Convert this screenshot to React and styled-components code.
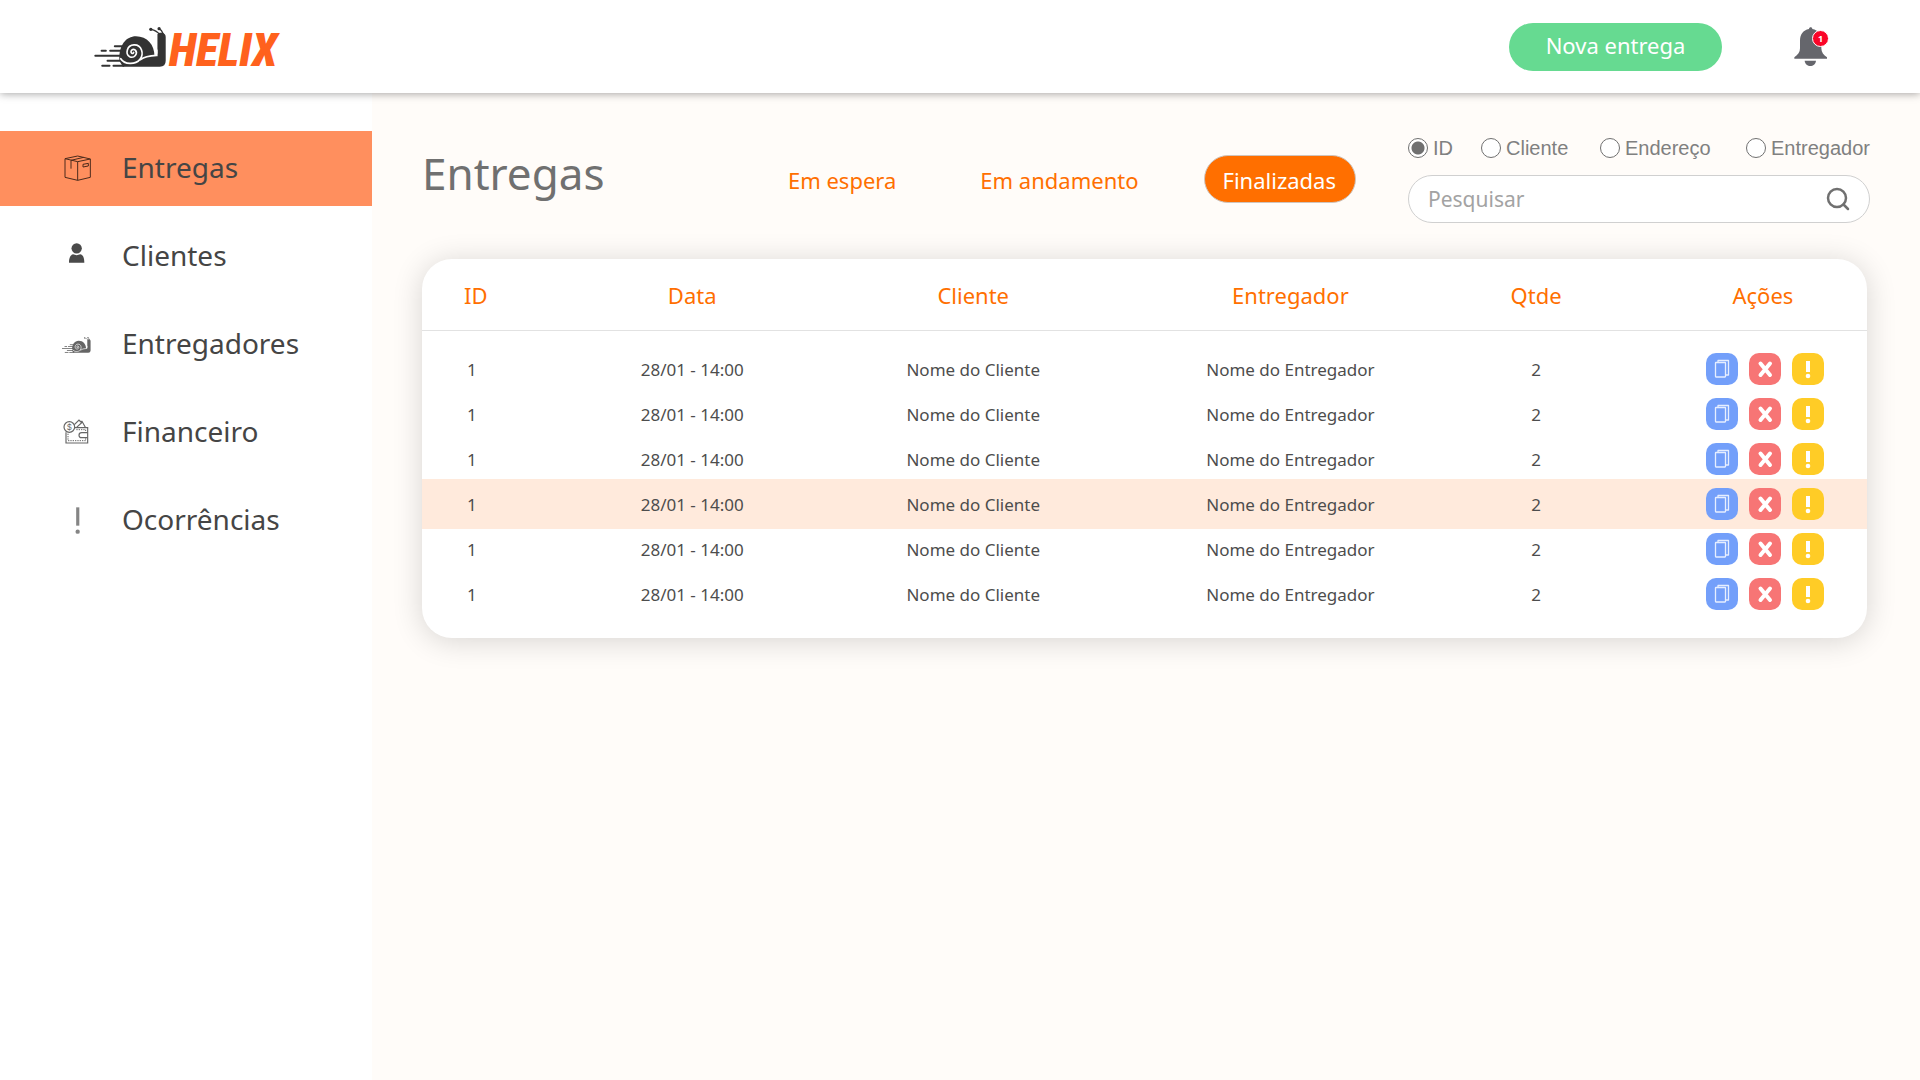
import React, { useState } from "react";
import styled, { createGlobalStyle } from "styled-components";

const ui = `"Noto Sans", "Open Sans", sans-serif`;
const orange = "#ff6f00";

const GlobalStyle = createGlobalStyle`
  *, *::before, *::after { box-sizing: border-box; }
  body { margin: 0; background: #fffcf9; font-family: ${ui}; color: #454545; }
  button, input { font-family: inherit; }
  button { border: 0; cursor: pointer; }
`;

const Page = styled.div`
  min-height: 100vh;
  display: flex;
  flex-direction: column;
`;

const TopBar = styled.header`
  position: relative;
  z-index: 1;
  height: 93px;
  padding: 0 91px 0 94px;
  display: flex;
  align-items: center;
  background: #fff;
  box-shadow: 0 1px 8px rgba(0, 0, 0, 0.35);
`;

const Logo = styled.a`
  margin-right: auto;
  display: flex;
  align-items: flex-end;
  gap: 2px;
  color: #ff611d;
  text-decoration: none;
`;

const LogoName = styled.span`
  font-family: "Roboto Condensed", "Open Sans Condensed", "Noto Sans Condensed", "Roboto", sans-serif;
  font-size: 46px;
  line-height: 34px;
  font-weight: 900;
  font-style: italic;
`;

const NewButton = styled.button`
  height: 48px;
  width: 213px;
  padding: 0 0 4px;
  margin-right: 72px;
  border-radius: 24px;
  background: #66da91;
  color: #fff;
  font-size: 22px;
`;

const BellButton = styled.button`
  position: relative;
  padding: 0;
  width: 35px;
  height: 40px;
  background: none;
`;

const Badge = styled.span`
  position: absolute;
  top: 3px;
  right: 0;
  width: 17px;
  height: 17px;
  border: 1px solid #fff;
  border-radius: 50%;
  background: #fa0528;
  color: #fff;
  font-size: 9px;
  line-height: 15px;
  font-weight: 700;
`;

const Body = styled.div`
  flex: 1;
  display: flex;
`;

const Sidebar = styled.nav`
  flex: 0 0 372px;
  padding-top: 38px;
  display: flex;
  flex-direction: column;
  gap: 13px;
  background: #fff;
`;

const NavItem = styled.a`
  height: 75px;
  padding-left: 61px;
  display: flex;
  align-items: center;
  gap: 30px;
  background: ${(p) => (p.$active ? "#ff8f5e" : "transparent")};
  color: #454545;
  font-size: 28px;
  text-decoration: none;

  svg { flex: none; }
  span { padding-bottom: 4px; }
`;

const Main = styled.main`
  flex: 1;
  min-width: 0;
  padding: 45px 50px;
`;

const Toolbar = styled.div`
  display: flex;
  align-items: flex-start;
`;

const Title = styled.h1`
  flex: 1;
  margin: 0;
  color: #707070;
  font-size: 44px;
  line-height: 70px;
  font-weight: 400;
`;

const Tabs = styled.div`
  display: flex;
  gap: 45px;
  margin: 17px 52px 0 0;
`;

const Tab = styled.button`
  height: 48px;
  padding: 2px 19px 0 18px;
  border: 1px solid ${(p) => (p.$active ? "#cfc4bd" : "transparent")};
  border-radius: 24px;
  background: ${(p) => (p.$active ? orange : "transparent")};
  color: ${(p) => (p.$active ? "#fff" : orange)};
  font-size: 22px;
  white-space: nowrap;
`;

const SearchForm = styled.form`
  width: 462px;
`;

const Filters = styled.div`
  display: grid;
  grid-template-columns: 73px 119px 146px 1fr;
`;

const Filter = styled.label`
  display: flex;
  align-items: center;
  gap: 5px;
  color: #808080;
  font-family: "Liberation Sans", Arial, sans-serif;
  font-size: 20px;
  line-height: 20px;

  input {
    appearance: none;
    flex: none;
    width: 20px;
    height: 20px;
    margin: 0;
    border: 1px solid #707070;
    border-radius: 50%;
    background: #fff;
  }
  input:checked {
    border-color: #707070;
    background: radial-gradient(circle, #707070 0 6px, #fff 7px);
  }
`;

const SearchBox = styled.div`
  height: 48px;
  margin-top: 17px;
  padding: 0 19px;
  display: flex;
  align-items: center;
  border: 1px solid #d0d0d0;
  border-radius: 24px;
  background: #fff;

  input {
    flex: 1;
    min-width: 0;
    padding: 0;
    border: 0;
    outline: 0;
    background: none;
    color: #707070;
    font-size: 21px;
  }
  input::placeholder { color: #a3a3a3; opacity: 1; }
  button { display: flex; padding: 0; background: none; }
`;

const Card = styled.section`
  margin: 36px 3px 0 0;
  padding-bottom: 21px;
  border-radius: 30px;
  background: #fff;
  box-shadow: 0 3px 30px rgba(0, 0, 0, 0.16);
`;

const Table = styled.table`
  width: 100%;
  table-layout: fixed;
  border-spacing: 0;

  tbody::before {
    content: "";
    display: block;
    height: 16px;
  }
`;

const Head = styled.th`
  height: 72px;
  padding: 0 0 0 ${(p) => (p.$first ? "42px" : "0")};
  border-bottom: 1px solid #e2e2e2;
  color: ${orange};
  font-size: 22px;
  font-weight: 400;
  text-align: ${(p) => (p.$first ? "left" : "center")};
`;

const Cell = styled.td`
  height: 45px;
  padding: 0 0 0 ${(p) => (p.$first ? "45px" : "0")};
  color: #4d4d4d;
  font-size: 17px;
  line-height: 20px;
  text-align: ${(p) => (p.$first ? "left" : "center")};
`;

const Row = styled.tr`
  ${Cell} {
    background: ${(p) => (p.$highlight ? "#ffeadc" : "none")};
    box-shadow: ${(p) => (p.$highlight ? "0 -3px #ffeadc, 0 2px #ffeadc" : "none")};
  }
`;

const Actions = styled.div`
  display: flex;
  justify-content: center;
  gap: 11px;
  padding: 0 0 1px 4px;
`;

const Action = styled.button`
  width: 32px;
  height: 32px;
  padding: 0;
  display: grid;
  place-items: center;
  border-radius: 10px;
  background: ${(p) => p.$color};
`;

const Snail = ({ width, height, color = "#333", opacity = 1 }) => (
  <svg width={width} height={height} viewBox="42 50 219 121" opacity={opacity} aria-hidden="true">
    <g fill={color}>
      <path d="M118 150 C116 105 138 78 168 78 C202 78 224 104 224 138 L233 130 V72 C238 65 258 66 258 80 V152 Q258 170 240 170 H128 C124 160 119 158 118 150Z" />
      <circle cx="213" cy="57" r="5" />
      <circle cx="238" cy="55" r="5" />
    </g>
    <g fill="none" stroke={color} strokeWidth="4">
      <path d="M213 57 Q232 61 240 73" />
      <path d="M238 55 Q248 60 251 72" />
    </g>
    <g fill="none" stroke={color} strokeWidth="6" strokeLinecap="round">
      <path d="M104 108 H130" />
      <path d="M90 122 H124M64 122 H77" />
      <path d="M45 137 H122" />
      <path d="M82 152 H122" />
      <path d="M66 167 H88M100 167 H130" />
    </g>
    <g fill="none" stroke="#fff" strokeWidth="5" strokeLinecap="round">
      <path d="M122 146 C133 164 166 165 180 148 C193 132 186 103 162 104 C140 105 135 132 149 140 C163 146 175 130 166 120 C158 114 149 123 155 129 Q159 132 161 127" />
      <path d="M182 149 Q195 138 231 136 V120" />
    </g>
  </svg>
);

const BoxIcon = () => (
  <svg width="31" height="27" viewBox="184 136 93 81" fill="none" stroke="#4c2b1c" strokeWidth="3" strokeLinejoin="round" aria-hidden="true">
    <path d="M196 147 L234 139 L272 148 V203 L234 212 L196 203Z M196 147 L234 156 L272 148 M234 156 V212" />
    <path d="M214 177 V152 L252 143 M250 164 L266 161 V169 L250 172Z" />
  </svg>
);

const PersonIcon = () => (
  <svg width="31" height="27" viewBox="184 402 93 81" fill="#4a4a4a" aria-hidden="true">
    <circle cx="231" cy="418" r="15.5" />
    <path d="M208 461 C208 446 213 438 220 436 Q231 441 242 436 C250 438 254 446 254 461Z" />
  </svg>
);

const WalletIcon = () => (
  <svg width="31" height="27" viewBox="184 326 93 81" fill="none" stroke="#666" strokeWidth="3.500" aria-hidden="true">
    <path d="M199 366 V398 H264 V352 H226" />
    <path d="M224 343 L238 329 L246 337 L230 352 M240 334 L247 333 L257 351" />
    <path d="M264 367 H246 Q238 367 238 374.500 Q238 382 246 382 H264" />
    <path d="M205 370 V391 H258 V384 M230 358 H258 V364" strokeDasharray="4 3" strokeWidth="3" />
    <circle cx="209" cy="350" r="16" fill="#fff" />
    <text x="209" y="359" fill="#666" stroke="none" fontSize="25" fontFamily="Liberation Sans, sans-serif" textAnchor="middle">$</text>
  </svg>
);

const AlertIcon = () => (
  <svg width="31" height="27" viewBox="184 592 93 81" fill="#858585" aria-hidden="true">
    <path d="M229.500 593 H239 V648 H229.500Z" />
    <circle cx="234" cy="666" r="6.500" />
  </svg>
);

const BellIcon = () => (
  <svg width="35" height="40" viewBox="943 78 105 120" fill="#65666c" aria-hidden="true">
    <path d="M988 84 C988 77 998 77 998 84 C1016 87 1025 101 1025 118 V142 C1025 154 1032 162 1042 169 V173 H944 V169 C955 161 961 154 961 142 V118 C961 101 970 87 988 84Z" />
    <path d="M975 179 H1009 C1007 200 977 200 975 179Z" />
  </svg>
);

const SearchIcon = () => (
  <svg width="24" height="24" viewBox="0 0 24 24" fill="none" stroke="#707070" strokeWidth="2.500" strokeLinecap="round" aria-hidden="true">
    <circle cx="11" cy="11" r="9" />
    <path d="M17.500 17.500 L22 22" />
  </svg>
);

const CopyIcon = () => (
  <svg width="16" height="20" viewBox="0 0 16 20" fill="none" stroke="#e6eeff" strokeWidth="1.300" strokeLinejoin="round" aria-hidden="true">
    <path d="M4 3 V1.500 H14.500 V16 H12" />
    <rect x="1.500" y="3.500" width="10" height="14.500" rx="0.500" />
  </svg>
);

const CrossIcon = () => (
  <svg width="16" height="18" viewBox="0 0 16 18" fill="none" stroke="#fff" strokeWidth="4" strokeLinecap="round" aria-hidden="true">
    <path d="M3.500 3.500 L13 15 M13 3.500 L3.500 15" />
  </svg>
);

const BangIcon = () => (
  <svg width="8" height="20" viewBox="0 0 8 20" fill="#fff" aria-hidden="true">
    <path d="M2 2 H6 V13 H2Z" />
    <circle cx="4" cy="17" r="2.300" />
  </svg>
);

const navItems = [
  { label: "Entregas", icon: <BoxIcon /> },
  { label: "Clientes", icon: <PersonIcon /> },
  { label: "Entregadores", icon: <Snail width={31} height={16} color="#555" opacity={0.9} /> },
  { label: "Financeiro", icon: <WalletIcon /> },
  { label: "Ocorrências", icon: <AlertIcon /> },
];

const tabs = ["Em espera", "Em andamento", "Finalizadas"];
const filters = ["ID", "Cliente", "Endereço", "Entregador"];

const columns = [
  { label: "ID", width: "12.7%" },
  { label: "Data", width: "12%" },
  { label: "Cliente", width: "26.9%" },
  { label: "Entregador", width: "17%" },
  { label: "Qtde", width: "17%" },
  { label: "Ações", width: "14.4%" },
];

const deliveries = Array.from({ length: 6 }, (_, i) => ({
  key: i,
  values: ["1", "28/01 - 14:00", "Nome do Cliente", "Nome do Entregador", "2"],
  highlight: i === 3,
}));

export default function App() {
  const [tab, setTab] = useState("Finalizadas");
  const [filter, setFilter] = useState("ID");

  return (
    <Page>
      <GlobalStyle />
      <TopBar>
        <Logo href="#">
          <Snail width={73} height={40} />
          <LogoName>HELIX</LogoName>
        </Logo>
        <NewButton type="button">Nova entrega</NewButton>
        <BellButton type="button" aria-label="Notificações">
          <BellIcon />
          <Badge>1</Badge>
        </BellButton>
      </TopBar>
      <Body>
        <Sidebar>
          {navItems.map((item, i) => (
            <NavItem key={item.label} href="#" $active={i === 0}>
              {item.icon}
              <span>{item.label}</span>
            </NavItem>
          ))}
        </Sidebar>
        <Main>
          <Toolbar>
            <Title>Entregas</Title>
            <Tabs>
              {tabs.map((name) => (
                <Tab key={name} type="button" $active={name === tab} onClick={() => setTab(name)}>
                  {name}
                </Tab>
              ))}
            </Tabs>
            <SearchForm onSubmit={(e) => e.preventDefault()}>
              <Filters>
                {filters.map((name) => (
                  <Filter key={name}>
                    <input type="radio" name="filter" checked={name === filter} onChange={() => setFilter(name)} />
                    {name}
                  </Filter>
                ))}
              </Filters>
              <SearchBox>
                <input type="text" placeholder="Pesquisar" aria-label="Pesquisar" />
                <button type="submit" aria-label="Buscar">
                  <SearchIcon />
                </button>
              </SearchBox>
            </SearchForm>
          </Toolbar>
          <Card>
            <Table>
              <colgroup>
                {columns.map((c) => (
                  <col key={c.label} style={{ width: c.width }} />
                ))}
              </colgroup>
              <thead>
                <tr>
                  {columns.map((c, i) => (
                    <Head key={c.label} scope="col" $first={i === 0}>
                      {c.label}
                    </Head>
                  ))}
                </tr>
              </thead>
              <tbody>
                {deliveries.map((d) => (
                  <Row key={d.key} $highlight={d.highlight}>
                    {d.values.map((value, i) => (
                      <Cell key={i} $first={i === 0}>
                        {value}
                      </Cell>
                    ))}
                    <Cell>
                      <Actions>
                        <Action type="button" aria-label="Copiar" $color="#739ffa">
                          <CopyIcon />
                        </Action>
                        <Action type="button" aria-label="Cancelar" $color="#f77575">
                          <CrossIcon />
                        </Action>
                        <Action type="button" aria-label="Ocorrência" $color="#ffcc26">
                          <BangIcon />
                        </Action>
                      </Actions>
                    </Cell>
                  </Row>
                ))}
              </tbody>
            </Table>
          </Card>
        </Main>
      </Body>
    </Page>
  );
}
